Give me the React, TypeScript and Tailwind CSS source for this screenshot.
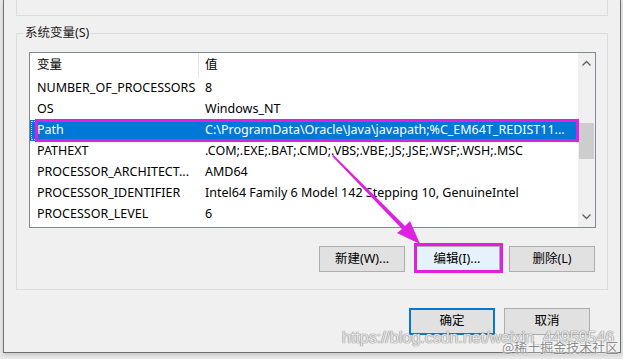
import React from "react";

const rows: [string, string][] = [
  ["NUMBER_OF_PROCESSORS", "8"],
  ["OS", "Windows_NT"],
  ["Path", "C:\\ProgramData\\Oracle\\Java\\javapath;%C_EM64T_REDIST11..."],
  ["PATHEXT", ".COM;.EXE;.BAT;.CMD;.VBS;.VBE;.JS;.JSE;.WSF;.WSH;.MSC"],
  ["PROCESSOR_ARCHITECT...", "AMD64"],
  ["PROCESSOR_IDENTIFIER", "Intel64 Family 6 Model 142 Stepping 10, GenuineIntel"],
  ["PROCESSOR_LEVEL", "6"],
];

export default function App() {
  const font = { fontFamily: '"Noto Sans", "Noto Sans CJK SC", sans-serif' };
  return (
    <div className="relative h-[359px] w-[623px] overflow-hidden bg-[#e9e9e9] text-[12.5px] text-black" style={font}>
      <div className="ml-[3px] h-[353px] w-[618px] border-x border-b border-[#6f6f6f] bg-[#f0f0f0] shadow-[0_2px_4px_rgba(0,0,0,0.15)]">
        <div className="ml-[12px] h-[16px] w-[592px] border-x border-b border-[#dcdcdc]" />
        <div className="relative ml-[12px] mt-[17px] h-[257px] w-[592px] border border-[#dcdcdc]">
          <div className="absolute left-[6px] top-[-9px] bg-[#f0f0f0] px-[2px] leading-[16px] text-[#1a1a1a]">系统变量(S)</div>
          <div className="ml-[12px] mt-[18px] flex h-[176px] w-[567px] border border-[#828790] bg-white">
            <div className="flex-1">
              <div className="flex h-[25px] items-center">
                <div className="flex h-full w-[169px] items-center border-r border-[#e5e5e5] pl-[7px]">变量</div>
                <div className="pl-[6px]">值</div>
              </div>
              {rows.map(([k, v]) => {
                const sel = k === "Path";
                return (
                  <div key={k} className={`flex h-[21px] items-center whitespace-nowrap ${sel ? "bg-[#0078d7] text-white outline-1 outline-dotted -outline-offset-2 outline-white/70" : ""}`}>
                    <div className="w-[169px] pl-[7px]">{k}</div>
                    <div className="pl-[6px]">{v}</div>
                  </div>
                );
              })}
            </div>
            <div className="flex w-[17px] flex-col items-center bg-[#f0f0f0]">
              <svg width="17" height="17" viewBox="0 0 17 17" className="mt-[2px]">
                <path d="M4.5 10.5 L8.5 6.5 L12.5 10.5" fill="none" stroke="#606060" strokeWidth="1.3" />
              </svg>
              <div className="mt-[51px] h-[36px] w-[15px] bg-[#cdcdcd]" />
              <div className="flex-1" />
              <svg width="17" height="17" viewBox="0 0 17 17" className="mb-[2px]">
                <path d="M4.5 6.5 L8.5 10.5 L12.5 6.5" fill="none" stroke="#606060" strokeWidth="1.3" />
              </svg>
            </div>
          </div>
          <div className="mr-[12px] mt-[18px] flex justify-end gap-[9px]">
            <button className="h-[26px] w-[86px] border border-[#adadad] bg-[#e1e1e1]">新建(W)...</button>
            <button className="h-[26px] w-[86px] border border-[#adadad] bg-[#e5f1fb]">编辑(I)...</button>
            <button className="h-[26px] w-[86px] border border-[#adadad] bg-[#e1e1e1]">删除(L)</button>
          </div>
        </div>
        <div className="mr-[30px] mt-[18px] flex justify-end gap-[9px]">
          <button className="h-[27px] w-[86px] border-2 border-[#0078d7] bg-[#e1e1e1]">确定</button>
          <button className="h-[27px] w-[86px] border border-[#adadad] bg-[#e1e1e1]">取消</button>
        </div>
      </div>
      {/* magenta highlight boxes */}
      <div className="pointer-events-none absolute left-[35px] top-[119px] h-[23px] w-[544px] border-[3px] border-[#e020e0]" />
      <div className="pointer-events-none absolute left-[414px] top-[243px] h-[30px] w-[89px] border-[3px] border-[#e020e0]" />
      <svg className="pointer-events-none absolute left-0 top-0" width="623" height="359">
        <polygon points="332,156 333.5,155 405,226 410,221 420,244 397,233 402,229" fill="#e020e0" />
      </svg>
      {/* watermarks */}
      <div
        className="pointer-events-none absolute left-[342px] top-[328px] whitespace-nowrap text-[16px] leading-[19px] text-white/80 [text-shadow:0_0_1px_#8a8a8a,0_0_1px_#8a8a8a,0_0_1px_#8a8a8a]"
        style={{ fontFamily: '"Liberation Sans", sans-serif' }}
      >
        https://blog.csdn.net/weixin_44959546
      </div>
      <div
        className="pointer-events-none absolute left-[502px] top-[339px] whitespace-nowrap text-[13px] leading-[16px] text-[#8c8c8c] [text-shadow:0_0_2px_#ffffff,0_0_2px_#ffffff]"
        style={{ fontFamily: '"Noto Sans CJK SC", sans-serif' }}
      >
        @稀土掘金技术社区
      </div>
    </div>
  );
}
